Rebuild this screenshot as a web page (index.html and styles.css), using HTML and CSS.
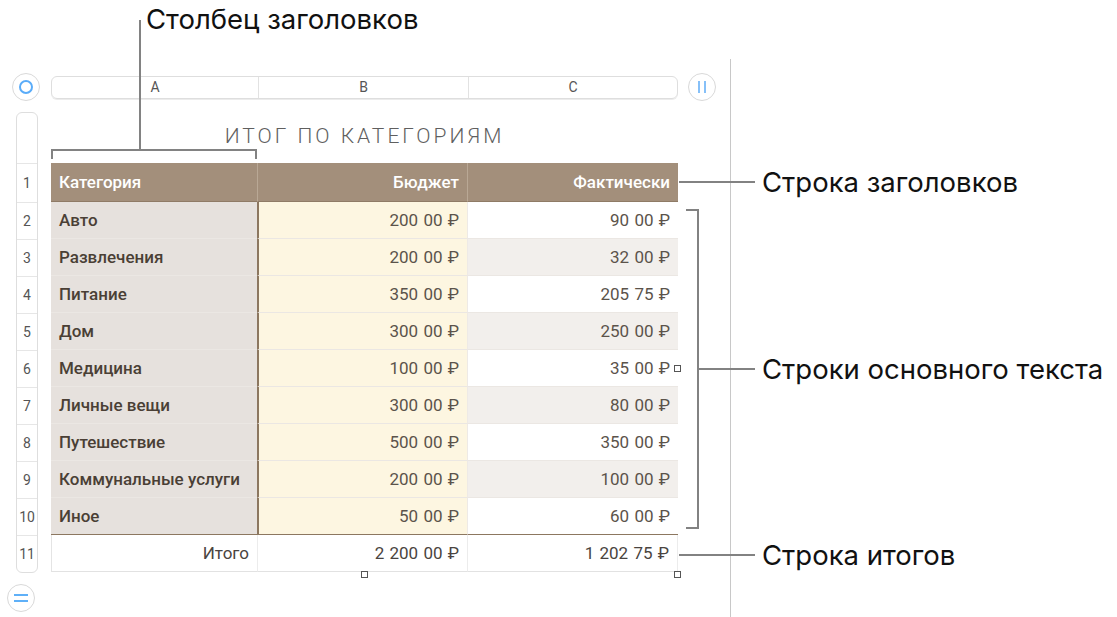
FILE: index.html
```html
<!DOCTYPE html>
<html lang="ru">
<head>
<meta charset="utf-8">
<title>Итог по категориям</title>
<link rel="stylesheet" href="styles.css">
</head>
<body>
<div class="page">
  <div class="toprow">
    <div class="round-btn"><span class="ring"></span></div>
    <div class="colbar">
      <div class="colhead">A</div>
      <div class="colhead">B</div>
      <div class="colhead">C</div>
    </div>
    <div class="round-btn"><span class="vbars"></span></div>
  </div>

  <div class="main">
    <div class="gutter-col">
      <div class="gutter">
        <div class="gutter-blank"></div>
        <div class="rn rn-head">1</div>
        <div class="rn">2</div>
        <div class="rn">3</div>
        <div class="rn">4</div>
        <div class="rn">5</div>
        <div class="rn">6</div>
        <div class="rn">7</div>
        <div class="rn">8</div>
        <div class="rn">9</div>
        <div class="rn">10</div>
        <div class="rn">11</div>
      </div>
      <div class="round-btn bottom-btn"><span class="hbars"></span></div>
    </div>

    <div class="tablearea">
      <div class="title">ИТОГ ПО КАТЕГОРИЯМ</div>
      <div class="grid">
        <div class="c h ha">Категория</div>
        <div class="c h hb">Бюджет</div>
        <div class="c h hc">Фактически</div>

        <div class="c a">Авто</div><div class="c b">200 00 ₽</div><div class="c cc">90 00 ₽</div>
        <div class="c a">Развлечения</div><div class="c b">200 00 ₽</div><div class="c cc alt">32 00 ₽</div>
        <div class="c a">Питание</div><div class="c b">350 00 ₽</div><div class="c cc">205 75 ₽</div>
        <div class="c a">Дом</div><div class="c b">300 00 ₽</div><div class="c cc alt">250 00 ₽</div>
        <div class="c a">Медицина</div><div class="c b">100 00 ₽</div><div class="c cc">35 00 ₽</div>
        <div class="c a">Личные вещи</div><div class="c b">300 00 ₽</div><div class="c cc alt">80 00 ₽</div>
        <div class="c a">Путешествие</div><div class="c b">500 00 ₽</div><div class="c cc">350 00 ₽</div>
        <div class="c a">Коммунальные услуги</div><div class="c b">200 00 ₽</div><div class="c cc alt">100 00 ₽</div>
        <div class="c a last">Иное</div><div class="c b last">50 00 ₽</div><div class="c cc last">60 00 ₽</div>

        <div class="c t ta">Итого</div><div class="c t">2 200 00 ₽</div><div class="c t tc">1 202 75 ₽</div>
      </div>
    </div>
  </div>

  <!-- overlays: selection handles -->
  <span class="handle h1"></span>
  <span class="handle h2"></span>
  <span class="handle h3"></span>

  <!-- callouts -->
  <div class="vsep"></div>

  <div class="col-bracket"></div>
  <div class="col-stem"></div>
  <div class="label lbl-col">Столбец заголовков</div>

  <div class="lead lead-head"></div>
  <div class="label lbl-head">Строка заголовков</div>

  <div class="body-bracket"></div>
  <div class="lead lead-body"></div>
  <div class="label lbl-body">Строки основного текста</div>

  <div class="lead lead-total"></div>
  <div class="label lbl-total">Строка итогов</div>
</div>
</body>
</html>
```

FILE: styles.css
```css
html, body {
  margin: 0;
  padding: 0;
  background: #ffffff;
}

.page {
  position: relative;
  width: 1117px;
  height: 617px;
  overflow: hidden;
  box-sizing: border-box;
  padding-top: 73px;
  font-family: Roboto, "Liberation Sans", sans-serif;
}

/* ---------- top bar ---------- */
.toprow {
  display: flex;
  align-items: center;
  height: 28px;
  margin-left: 12px;
}

.round-btn {
  width: 28px;
  height: 28px;
  box-sizing: border-box;
  border: 1.5px solid #d9d9d9;
  border-radius: 50%;
  background: #fff;
  display: flex;
  align-items: center;
  justify-content: center;
  flex: none;
}

.ring {
  width: 10px;
  height: 10px;
  border: 2px solid #5aacf9;
  border-radius: 50%;
}

.vbars {
  width: 4px;
  height: 12px;
  border-left: 2px solid #86c0f8;
  border-right: 2px solid #86c0f8;
}

.hbars {
  width: 14px;
  height: 4px;
  border-top: 2px solid #5fb0f8;
  border-bottom: 2px solid #5fb0f8;
}

.colbar {
  margin-left: 11px;
  margin-right: 10px;
  width: 627px;
  height: 23px;
  box-sizing: border-box;
  border: 1px solid #dedede;
  border-radius: 6px;
  box-shadow: 0 1px 0 #ececec;
  display: grid;
  grid-template-columns: 206px 210px 1fr;
  align-items: center;
}

.colhead {
  text-align: center;
  font-size: 14px;
  color: #555;
  height: 100%;
  line-height: 21px;
}

.colhead + .colhead {
  border-left: 1px solid #e2e2e2;
}

/* ---------- main ---------- */
.main {
  display: flex;
  margin-top: 11px;
  margin-left: 16px;
}

.gutter-col {
  width: 22px;
  display: flex;
  flex-direction: column;
  align-items: center;
}

.gutter {
  width: 22px;
  box-sizing: border-box;
  border: 1px solid #dedede;
  border-radius: 6px;
  background: #fff;
}

.gutter-blank {
  height: 50px;
}

.rn {
  height: 37px;
  border-top: 1px solid #e6e6e6;
  box-sizing: border-box;
  font-size: 14px;
  color: #555;
  text-align: center;
  line-height: 36px;
}

.rn-head {
  height: 39px;
  line-height: 38px;
}

.bottom-btn {
  margin-top: 11px;
  margin-left: -12px;
}

.tablearea {
  margin-left: 13px;
  width: 627px;
}

.title {
  height: 51px;
  box-sizing: border-box;
  padding-top: 12px;
  text-align: center;
  font-size: 21px;
  font-weight: 300;
  letter-spacing: 3px;
  color: #5f5f5f;
}

/* ---------- grid table ---------- */
.grid {
  display: grid;
  grid-template-columns: 206px 210px 211px;
  grid-template-rows: 39px repeat(10, 37px);
}

.c {
  display: flex;
  align-items: center;
  box-sizing: border-box;
  padding: 0 8px;
  font-size: 17px;
  border-bottom: 1px solid #ebe7e3;
}

.h {
  background: #a38f7b;
  color: #ffffff;
  font-weight: 500;
  border-bottom: 1px solid #8f7b66;
}

.hb, .hc {
  justify-content: flex-end;
  border-left: 1px solid #b9a895;
}

.a {
  background: #e6e1dd;
  color: #4a3f35;
  font-weight: 500;
}

.b {
  justify-content: flex-end;
  background: #fdf6e1;
  color: #5b534b;
  border-left: 2px solid #8c7760;
  word-spacing: 1px;
}

.cc {
  justify-content: flex-end;
  background: #ffffff;
  color: #5b534b;
  border-left: 1px solid #eeeae6;
  word-spacing: 1px;
}

.cc.alt {
  background: #f2efec;
}

.last {
  border-bottom: 1px solid #8c7760;
}

.t {
  justify-content: flex-end;
  background: #fff;
  color: #4a4440;
  border-bottom: 1px solid #e2e2e2;
  border-left: 1px solid #ececec;
  word-spacing: 1px;
}

.ta { border-left: 1px solid #e4e4e4; }
.tc { border-right: 1px solid #ececec; }

/* ---------- handles ---------- */
.handle {
  position: absolute;
  width: 7px;
  height: 7px;
  box-sizing: border-box;
  border: 1px solid #555;
  background: #fff;
}
.h1 { left: 361px; top: 571px; }
.h2 { left: 674px; top: 571px; }
.h3 { left: 674px; top: 365px; }

/* ---------- callouts ---------- */
.vsep {
  position: absolute;
  left: 730px;
  top: 59px;
  width: 1px;
  height: 560px;
  background: #c8c8c8;
}

.col-bracket {
  position: absolute;
  left: 51px;
  top: 149px;
  width: 206px;
  height: 10px;
  box-sizing: border-box;
  border: 2px solid #828282;
  border-bottom: none;
}

.col-stem {
  position: absolute;
  left: 139px;
  top: 20px;
  width: 2px;
  height: 130px;
  background: #828282;
}

.lead {
  position: absolute;
  height: 2px;
  background: #828282;
}
.lead-head { left: 679px; top: 181px; width: 76px; }
.lead-body { left: 697px; top: 368px; width: 58px; }
.lead-total { left: 679px; top: 554px; width: 76px; }

.body-bracket {
  position: absolute;
  left: 686px;
  top: 209px;
  width: 13px;
  height: 320px;
  box-sizing: border-box;
  border: 2px solid #828282;
  border-left: none;
}

.label {
  position: absolute;
  font-family: Inter, "Noto Sans", sans-serif;
  font-size: 27.5px;
  color: #111;
  line-height: 34px;
  white-space: nowrap;
}
.lbl-col { left: 146px; top: 2px; }
.lbl-head { left: 762px; top: 165px; }
.lbl-body { left: 762px; top: 352px; }
.lbl-total { left: 762px; top: 538px; }
```
